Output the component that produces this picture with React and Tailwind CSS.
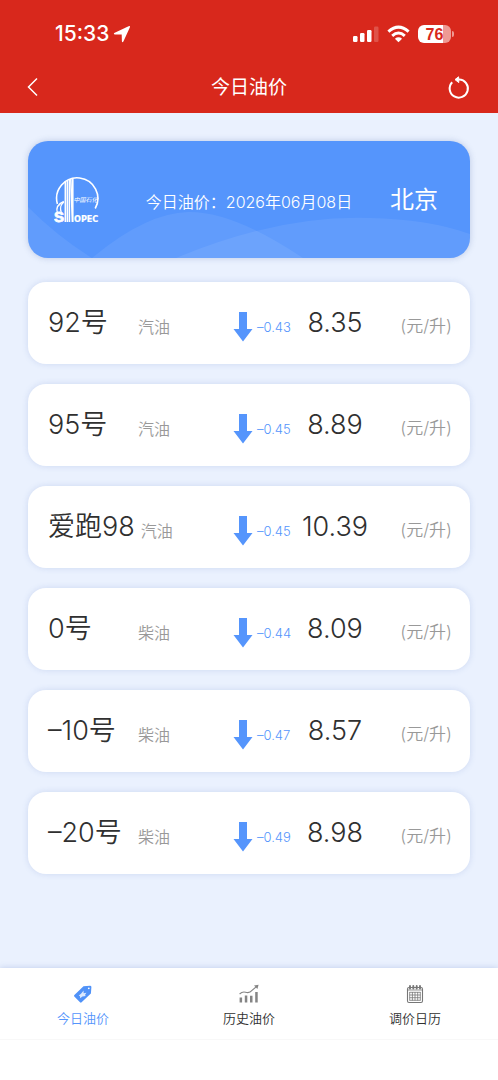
const prices = [
  { name: "92号", kind: "汽油", change: "–0.43", price: "8.35" },
  { name: "95号", kind: "汽油", change: "–0.45", price: "8.89" },
  { name: "爱跑98", kind: "汽油", change: "–0.45", price: "10.39" },
  { name: "0号", kind: "柴油", change: "–0.44", price: "8.09" },
  { name: "–10号", kind: "柴油", change: "–0.47", price: "8.57" },
  { name: "–20号", kind: "柴油", change: "–0.49", price: "8.98" },
];

const tabs = [
  { label: "今日油价", icon: TagIcon, active: true },
  { label: "历史油价", icon: TrendIcon },
  { label: "调价日历", icon: CalendarIcon },
];

function TagIcon() {
  return (
    <svg width="20" height="20" viewBox="0 0 20 20" aria-hidden="true">
      <path d="M10.5 2.2 L17 1.7 Q18.4 1.7 18.4 3 L17.9 9.6 L8.6 18.3 Q7.8 19 7 18.2 L1.3 12.4 Q.6 11.6 1.4 10.9Z" fill="#5092f8" />
      <circle cx="15.8" cy="4.3" r=".9" fill="#fff" />
      <path d="M10.6 6.6 L10.6 9.3 L13.4 8.8 L12 10.9 L12.8 12 L9.4 12.6 L7.2 14.2 L7 12.2 L5.8 11.4 L8 9.8Z" fill="#fff" opacity=".8" />
    </svg>
  );
}

function TrendIcon() {
  return (
    <svg width="20" height="20" viewBox="0 0 20 20" fill="#858585" aria-hidden="true">
      <path d="M.6 13.6h2.5v5H.6zM5.8 11.4h2.5v7.2H5.8zM11 11.8h2.5v6.8H11zM16.2 8h2.5v10.6h-2.5z" />
      <path d="M.6 10 Q3.5 7.2 6.5 8.2 Q10.5 9.6 13 6.4 L17.4 2.6" fill="none" stroke="#858585" strokeWidth="1.1" />
      <path d="M15 1.6 L19.6 .8 L18.4 5Z" />
    </svg>
  );
}

function CalendarIcon() {
  return (
    <svg width="20" height="20" viewBox="0 0 20 20" fill="none" stroke="#777" aria-hidden="true">
      <rect x="2.5" y="3.5" width="15" height="15" rx="1.5" strokeWidth="1.1" />
      <path d="M3 6h14" strokeWidth=".8" />
      <path d="M5 2v2.5M8.3 2v2.5M11.7 2v2.5M15 2v2.5" strokeWidth="1.9" strokeLinecap="round" />
      <path d="M4.5 8.3h11M4.5 11h11M4.5 13.7h11M4.5 16.3h11M4.7 8v8.5M7.4 8v8.5M10 8v8.5M12.7 8v8.5M15.3 8v8.5" strokeWidth=".8" />
    </svg>
  );
}

function StatusBar() {
  return (
    <div className="flex h-[68px] items-center justify-between pr-11 pl-[55px]">
      <div className="flex items-center gap-1 text-[21px] font-medium">
        <span>15:33</span>
        <svg width="18" height="18" viewBox="0 0 18 18" fill="#fff" aria-hidden="true">
          <path d="M1.2 8.1 L15.6 1.2 Q17.6.4 16.8 2.4 L10.4 16.5 Q9.2 18 8.9 16.2 L8.7 9.6 L1.6 9.4 Q.2 9 1.2 8.1Z" />
        </svg>
      </div>
      <div className="flex items-center gap-2">
        <svg width="26" height="18" viewBox="0 0 26 18" fill="#fff" aria-hidden="true">
          <rect x="0" y="11" width="4.5" height="6" rx="1.2" />
          <rect x="7" y="8" width="4.5" height="9" rx="1.2" />
          <rect x="14" y="5" width="4.5" height="12" rx="1.2" />
          <rect x="21" y="1.5" width="4.5" height="15.5" rx="1.2" opacity=".2" />
        </svg>
        <svg width="23" height="18" viewBox="0 0 23 18" fill="none" stroke="#fff" strokeWidth="3" aria-hidden="true">
          <path d="M1.4 6.6 Q11.5 -2.4 21.6 6.6" />
          <path d="M5.2 10.8 Q11.5 5.2 17.8 10.8" />
          <path d="M11.5 17.2 L7.9 13.7 Q11.5 10.8 15.1 13.7Z" fill="#fff" stroke="none" />
        </svg>
        <div className="flex items-center gap-px">
          <div className="flex h-[18px] w-[33px] items-center justify-center rounded-md bg-linear-to-r from-white from-76% to-[#ee9a94] to-76% text-[16px] leading-none font-bold text-[#d8281c]">
            <span className="pt-px font-['Liberation_Sans']">76</span>
          </div>
          <div className="h-1.5 w-0.5 rounded-r-full bg-[#ee9a94]" />
        </div>
      </div>
    </div>
  );
}

function Logo() {
  return (
    <svg width="46" height="48" viewBox="0 0 46 48" fill="none" stroke="#fff" className="shrink-0" aria-label="SINOPEC">
      <path d="M3.4 28 A20.6 20.6 0 1 1 41.2 32.5" strokeWidth="1.6" />
      {/* road sweeping up out of the S */}
      <path d="M9.8 25.5 C4 28 1.6 31.5 3.4 37" strokeWidth="1.4" />
      <path d="M9.8 26 C6.6 29 5.6 31.5 7.4 37" strokeWidth="1.2" />
      <text x="0" y="46" fill="#fff" strokeWidth=".8" className="font-['Liberation_Sans'] text-[15px] font-bold">S</text>
      <path d="M11.4 5.5V46M13.6 4V46" strokeWidth="1.7" />
      <path d="M15.6 3V46" strokeWidth="1.2" />
      <path d="M16.8 3 L18.4 46M18.8 2.5V46" strokeWidth="1.6" />
      <text x="19.5" y="26" fill="#fff" stroke="none" className="text-[6px] italic">中国石化</text>
      <text x="20" y="46" fill="#fff" strokeWidth=".2" className="font-['DejaVu_Sans_Condensed'] text-[9px] font-bold">OPEC</text>
    </svg>
  );
}

function Banner() {
  return (
    <section className="relative overflow-hidden rounded-[20px] bg-[#5595fc] text-white shadow-[0_0_6px_rgba(80,110,170,0.3)]">
      {/* soft overlapping hills behind the text */}
      <svg className="absolute inset-0 h-full w-full" viewBox="0 0 442 117" preserveAspectRatio="none" fill="#fff" fillOpacity=".07" aria-hidden="true">
        <path d="M0 66 Q30 96 64 117 H0Z" />
        <path d="M64 117 Q118 72 160 71 Q205 70 275 117Z" />
        <path d="M148 117 Q250 74 342 77 Q400 78 442 93 V117Z" />
      </svg>
      <div className="relative flex h-[117px] items-center pr-8 pl-[26px]">
        <Logo />
        <p className="flex-1 pt-1 pl-2 text-center text-[16px] font-[350]">今日油价：2026年06月08日</p>
        <h2 className="text-[24px]">北京</h2>
      </div>
    </section>
  );
}

function PriceRow({ name, kind, change, price }) {
  return (
    <li className="flex h-[82px] items-center rounded-[18px] bg-white pr-[18px] pl-5 shadow-[0_0_6px_rgba(90,120,190,0.2)]">
      <div className="flex flex-1 items-center gap-1.5 whitespace-nowrap">
        <span className="min-w-[84px] text-[27px] font-[350] text-[#303030]">{name}</span>
        <span className="pt-2 text-[16px] font-[350] text-[#999]">{kind}</span>
      </div>
      <div className="flex w-[60px] items-center gap-1 pt-2 text-[13px] font-[350] text-[#5595fc]">
        <svg width="20" height="30" viewBox="0 0 20 30" fill="#5595fc" className="shrink-0" aria-hidden="true">
          <path d="M6 0h8v17h5.5L10 29.5.5 17H6z" />
        </svg>
        <span className="pt-0.5">{change}</span>
      </div>
      <strong className="w-[84px] text-center text-[27px] font-[350] text-[#303030]">{price}</strong>
      <span className="w-[75px] pt-2 text-right text-[17px] font-[350] text-[#999]">(元/升)</span>
    </li>
  );
}

export default function App() {
  return (
    <div className="flex min-h-screen flex-col bg-[#eaf1fe] font-['Inter','Noto_Sans_CJK_SC',sans-serif]">
      <header className="bg-[#d8281c] text-white">
        <StatusBar />
        <div className="flex h-[45px] items-start justify-between px-6">
          <button type="button" aria-label="返回" className="w-[30px] pt-2">
            <svg width="18" height="22" viewBox="0 0 18 22" fill="none" stroke="#fff" strokeWidth="1.5">
              <path d="M13 2.5 L4.5 11 L13 19.5" />
            </svg>
          </button>
          <h1 className="pt-1 text-[19px] leading-8">今日油价</h1>
          <button type="button" aria-label="刷新" className="w-[30px] pt-2">
            <svg width="30" height="24" viewBox="0 0 30 24" fill="none" stroke="#fff" strokeWidth="2">
              <path d="M8.2 6.2 A9.1 9.1 0 1 0 15 3.4" />
              <path d="M14.6 .8 L11 3.6 L14.8 6.6Z" fill="#fff" strokeWidth="1" strokeLinejoin="round" />
            </svg>
          </button>
        </div>
      </header>

      <main className="flex-1 px-7 pt-7">
        <Banner />
        <ul className="mt-6 flex flex-col gap-5">
          {prices.map((p) => (
            <PriceRow key={p.name} {...p} />
          ))}
        </ul>
      </main>

      <nav className="bg-white pb-10 shadow-[0_0_6px_rgba(90,120,190,0.3)]">
        <div className="grid h-[72px] grid-cols-3 border-b border-[#f8f8f8]">
          {tabs.map(({ label, icon: Icon, active }) => (
            <button
              key={label}
              type="button"
              className={`flex flex-col items-center gap-1 pt-4 text-[13px] leading-5 font-[350] ${active ? "text-[#5595fc]" : "text-[#303030]"}`}
            >
              <Icon />
              <span>{label}</span>
            </button>
          ))}
        </div>
      </nav>
    </div>
  );
}
